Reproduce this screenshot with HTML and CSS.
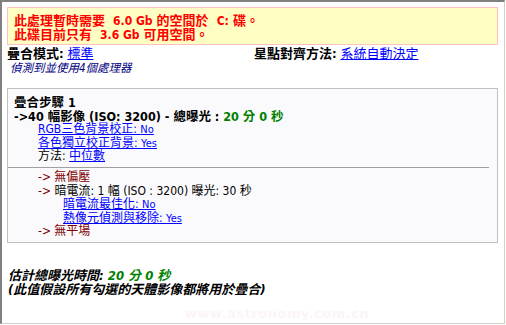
FILE: index.html
```html
<!DOCTYPE html>
<html lang="zh-Hant">
<head>
    <meta charset="UTF-8">
    <title>疊合設定摘要</title>
    <link rel="stylesheet" href="styles.css">
</head>
<body>

    <div class="frame">
        <!-- 空間不足警告 -->
        <div class="warn">
            <div>此處理暫時需要 <span class="num">6.0 Gb</span> 的空間於 <span class="num">C:</span> 碟。</div>
            <div>此碟目前只有 <span class="num">3.6 Gb</span> 可用空間。</div>
        </div>

        <div class="modes">
            <div><b>疊合模式:</b> <a href="#">標準</a></div>
            <div><b>星點對齊方法:</b> <a href="#">系統自動決定</a></div>
        </div>
        <div class="cpu">偵測到並使用4個處理器</div>

        <!-- 疊合步驟 -->
        <div class="step">
            <div class="step-title">疊合步驟 1</div>
            <div class="step-title">-&gt;40 幅影像 (ISO: 3200) - 總曝光 : <span class="green">20 分 0 秒</span></div>
            <div class="ind1"><a href="#">RGB三色背景校正: <span class="val">No</span></a></div>
            <div class="ind1"><a href="#">各色獨立校正背景: <span class="val">Yes</span></a></div>
            <div class="ind1">方法: <a href="#">中位數</a></div>
            <hr>
            <div class="ind1"><span class="dark">-&gt; 無偏壓</span></div>
            <div class="ind1"><span class="dark">-&gt;</span> 暗電流: 1 幅 (ISO : 3200) 曝光: 30 秒</div>
            <div class="ind2"><a href="#">暗電流最佳化: <span class="val">No</span></a></div>
            <div class="ind2"><a href="#">熱像元偵測與移除: <span class="val">Yes</span></a></div>
            <div class="ind1"><span class="dark">-&gt; 無平場</span></div>
        </div>

        <div class="total">
            <div>估計總曝光時間: <span class="green">20 分 0 秒</span></div>
            <div>(此值假設所有勾選的天體影像都將用於疊合)</div>
        </div>

        <div class="watermark">www.astronomy.com.cn</div>
    </div>

</body>
</html>
```

FILE: styles.css
```css
body {
    margin: 0;
    font-family: "DejaVu Sans Condensed", "Liberation Sans", "Noto Sans CJK TC", sans-serif;
    font-size: 11px;
    color: #000;
    background: #fff;
}
.frame {
    width: 491px;
    height: 316px;
    padding: 5px 6px 0 5px;
    border-top: 2px solid #808080;
    border-left: 2px solid #808080;
    border-right: 1px solid #d4d0c8;
    border-bottom: 1px solid #d4d0c8;
    position: relative;
}
.warn {
    background: #ffffc4;
    border: 1px solid #ffc0c0;
    color: #ff0000;
    font-weight: bold;
    font-size: 13px;
    line-height: 14px;
    padding: 6px 6px 2px;
}
.warn .num {
    font-size: 12px;
    padding-left: 4px;
}
.modes {
    display: grid;
    grid-template-columns: 247px 1fr;
    font-size: 13px;
    line-height: 14px;
    margin-top: 2px;
}
a {
    color: #0000ff;
}
.cpu {
    color: #000080;
    font-style: italic;
    font-size: 11.5px;
    line-height: 14px;
    padding-left: 3px;
}
.step {
    margin-top: 13px;
    border: 1px solid #c0c0c0;
    background: #fafafc;
    padding: 7px 0 6px 6px;
    height: 155px;
    box-sizing: border-box;
    line-height: 13.6px;
    font-size: 12px;
}
.step-title {
    font-weight: bold;
    font-size: 12.5px;
}
.green {
    color: #008000;
    font-weight: bold;
}
.ind1 {
    padding-left: 24px;
}
.ind2 {
    padding-left: 49px;
}
.val {
    font-size: 11px;
}
.step hr {
    border: 0;
    border-top: 1px solid #a0a0a0;
    margin: 3px 8px 3px -6px;
}
.dark {
    color: #800000;
}
.total {
    margin-top: 26px;
    font-weight: bold;
    font-style: italic;
    font-size: 13px;
    line-height: 14px;
    padding-left: 1px;
}
.watermark {
    position: absolute;
    left: 183px;
    top: 304px;
    color: #fdf5f5;
    font-family: "DejaVu Sans", sans-serif;
    font-weight: bold;
    font-size: 13px;
    letter-spacing: 0.5px;
}
```
